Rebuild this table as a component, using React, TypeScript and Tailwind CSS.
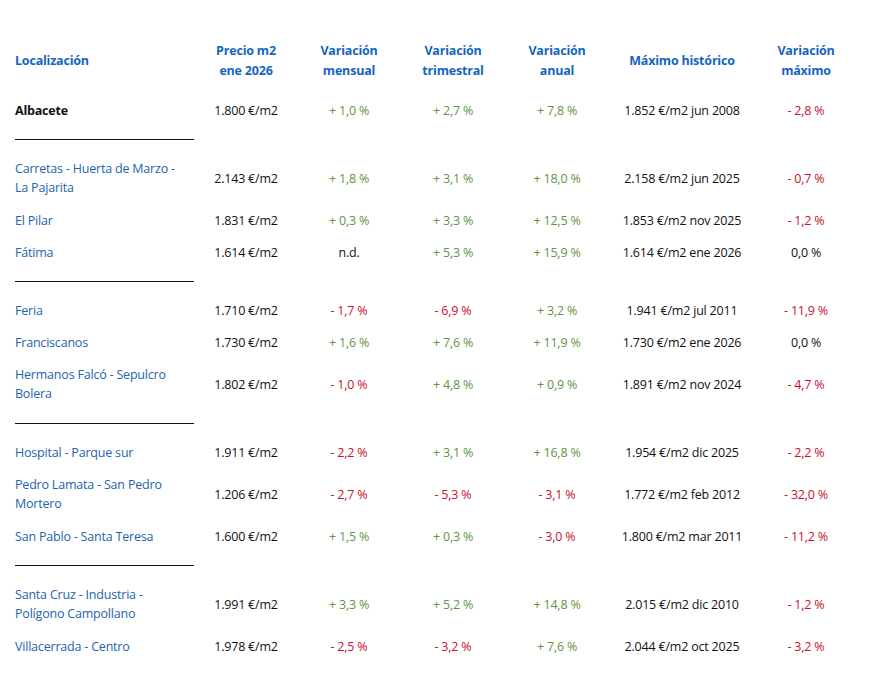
import React from "react";

// Tabla de precios por zona — columnas fijas, primera columna alineada a la izquierda.

type Tone = "up" | "down" | "flat";

type Row = {
  zona: React.ReactNode;
  precio: string;
  mensual: string;
  trimestral: string;
  anual: string;
  maximo: string;
  varMax: string;
  total?: boolean;
  dosLineas?: boolean;
};

const toneOf = (v: string): Tone =>
  v.startsWith("+") ? "up" : v.startsWith("-") ? "down" : "flat";

const toneClass: Record<Tone, string> = {
  up: "text-[#5f9444]",
  down: "text-[#c8102e]",
  flat: "text-[#111111]",
};

const groups: Row[][] = [
  [
    {
      zona: "Albacete",
      precio: "1.800 €/m2",
      mensual: "+ 1,0 %",
      trimestral: "+ 2,7 %",
      anual: "+ 7,8 %",
      maximo: "1.852 €/m2 jun 2008",
      varMax: "- 2,8 %",
      total: true,
    },
  ],
  [
    {
      zona: (
        <>
          Carretas - Huerta de Marzo -<br />La Pajarita
        </>
      ),
      precio: "2.143 €/m2",
      mensual: "+ 1,8 %",
      trimestral: "+ 3,1 %",
      anual: "+ 18,0 %",
      maximo: "2.158 €/m2 jun 2025",
      varMax: "- 0,7 %",
      dosLineas: true,
    },
    {
      zona: "El Pilar",
      precio: "1.831 €/m2",
      mensual: "+ 0,3 %",
      trimestral: "+ 3,3 %",
      anual: "+ 12,5 %",
      maximo: "1.853 €/m2 nov 2025",
      varMax: "- 1,2 %",
    },
    {
      zona: "Fátima",
      precio: "1.614 €/m2",
      mensual: "n.d.",
      trimestral: "+ 5,3 %",
      anual: "+ 15,9 %",
      maximo: "1.614 €/m2 ene 2026",
      varMax: "0,0 %",
    },
  ],
  [
    {
      zona: "Feria",
      precio: "1.710 €/m2",
      mensual: "- 1,7 %",
      trimestral: "- 6,9 %",
      anual: "+ 3,2 %",
      maximo: "1.941 €/m2 jul 2011",
      varMax: "- 11,9 %",
    },
    {
      zona: "Franciscanos",
      precio: "1.730 €/m2",
      mensual: "+ 1,6 %",
      trimestral: "+ 7,6 %",
      anual: "+ 11,9 %",
      maximo: "1.730 €/m2 ene 2026",
      varMax: "0,0 %",
    },
    {
      zona: (
        <>
          Hermanos Falcó - Sepulcro
          <br />
          Bolera
        </>
      ),
      precio: "1.802 €/m2",
      mensual: "- 1,0 %",
      trimestral: "+ 4,8 %",
      anual: "+ 0,9 %",
      maximo: "1.891 €/m2 nov 2024",
      varMax: "- 4,7 %",
      dosLineas: true,
    },
  ],
  [
    {
      zona: "Hospital - Parque sur",
      precio: "1.911 €/m2",
      mensual: "- 2,2 %",
      trimestral: "+ 3,1 %",
      anual: "+ 16,8 %",
      maximo: "1.954 €/m2 dic 2025",
      varMax: "- 2,2 %",
    },
    {
      zona: (
        <>
          Pedro Lamata - San Pedro
          <br />
          Mortero
        </>
      ),
      precio: "1.206 €/m2",
      mensual: "- 2,7 %",
      trimestral: "- 5,3 %",
      anual: "- 3,1 %",
      maximo: "1.772 €/m2 feb 2012",
      varMax: "- 32,0 %",
      dosLineas: true,
    },
    {
      zona: "San Pablo - Santa Teresa",
      precio: "1.600 €/m2",
      mensual: "+ 1,5 %",
      trimestral: "+ 0,3 %",
      anual: "- 3,0 %",
      maximo: "1.800 €/m2 mar 2011",
      varMax: "- 11,2 %",
    },
  ],
  [
    {
      zona: (
        <>
          Santa Cruz - Industria -
          <br />
          Polígono Campollano
        </>
      ),
      precio: "1.991 €/m2",
      mensual: "+ 3,3 %",
      trimestral: "+ 5,2 %",
      anual: "+ 14,8 %",
      maximo: "2.015 €/m2 dic 2010",
      varMax: "- 1,2 %",
      dosLineas: true,
    },
    {
      zona: "Villacerrada - Centro",
      precio: "1.978 €/m2",
      mensual: "- 2,5 %",
      trimestral: "- 3,2 %",
      anual: "+ 7,6 %",
      maximo: "2.044 €/m2 oct 2025",
      varMax: "- 3,2 %",
    },
  ],
];

const cols =
  "grid grid-cols-[180px_102px_104px_104px_104px_146px_102px] items-center";

function Pct({ v }: { v: string }) {
  return <div className={`text-center ${toneClass[toneOf(v)]}`}>{v}</div>;
}

function DataRow({ r }: { r: Row }) {
  return (
    <div
      className={`${cols} ${r.dosLineas ? "py-[7px]" : "py-[6.5px]"} leading-[19px]`}
    >
      <div
        className={r.total ? "font-bold text-[#111111]" : "text-[#2364ad]"}
      >
        {r.zona}
      </div>
      <div className="text-center text-[#111111]">{r.precio}</div>
      <Pct v={r.mensual} />
      <Pct v={r.trimestral} />
      <Pct v={r.anual} />
      <div className="text-center text-[#111111]">{r.maximo}</div>
      <Pct v={r.varMax} />
    </div>
  );
}

export default function App() {
  const heads = [
    ["Precio m2", "ene 2026"],
    ["Variación", "mensual"],
    ["Variación", "trimestral"],
    ["Variación", "anual"],
    ["Máximo histórico"],
    ["Variación", "máximo"],
  ];

  return (
    <div className="min-h-screen bg-white pl-[15px] pt-[28px] font-['Open_Sans',sans-serif] text-[12.5px] tracking-[-0.2px]">
      {/* Cabecera */}
      <div
        className={`${cols} py-[13px] leading-[20px] font-bold text-[#1565c0]`}
      >
        <div>Localización</div>
        {heads.map((h, i) => (
          <div key={i} className="text-center">
            {h.map((l, j) => (
              <div key={j}>{l}</div>
            ))}
          </div>
        ))}
      </div>

      {groups.map((g, gi) => (
        <div key={gi}>
          {gi > 0 && (
            <div className="flex h-[26px] items-center">
              <div className="h-px w-[179px] bg-[#111111]" />
            </div>
          )}
          {g.map((r, ri) => (
            <DataRow key={ri} r={r} />
          ))}
        </div>
      ))}
    </div>
  );
}
